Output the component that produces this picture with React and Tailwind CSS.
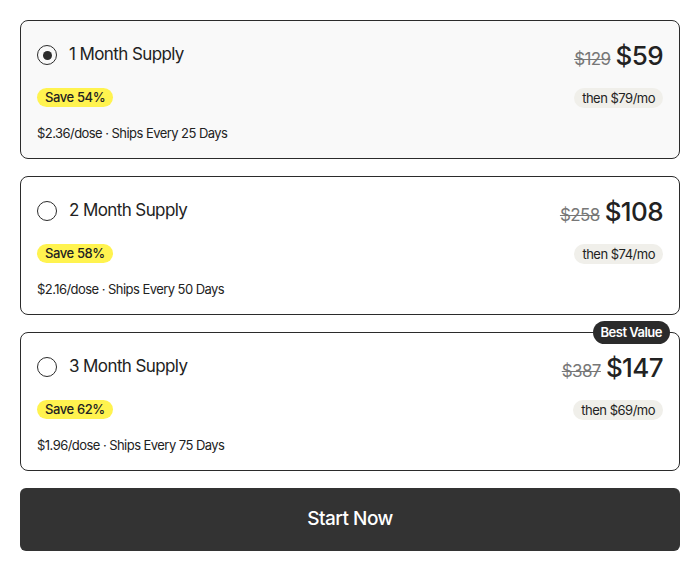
import React, { useState } from "react";

const plans = [
  { id: 1, name: "1 Month Supply", old: "$129", price: "$59", save: "Save 54%", then: "then $79/mo", dose: "$2.36/dose · Ships Every 25 Days" },
  { id: 2, name: "2 Month Supply", old: "$258", price: "$108", save: "Save 58%", then: "then $74/mo", dose: "$2.16/dose · Ships Every 50 Days" },
  { id: 3, name: "3 Month Supply", old: "$387", price: "$147", save: "Save 62%", then: "then $69/mo", dose: "$1.96/dose · Ships Every 75 Days", best: true },
];

function PlanCard({ plan, selected, onSelect }) {
  return (
    <div
      onClick={onSelect}
      className={`relative cursor-pointer rounded-lg px-4 pt-[18px] pb-[16px] ${
        selected ? "border-[1.5px] border-[#2b2b2b] bg-[#f9f9f9]" : "border border-[#2b2b2b] bg-white"
      }`}
    >
      {plan.best && (
        <span className="absolute -top-[12px] right-[9px] rounded-full bg-[#2b2b2b] px-[8px] py-[3px] text-[13px] font-semibold leading-[17px] tracking-[-0.5px] text-white">
          Best Value
        </span>
      )}
      <div className="flex h-8 items-center justify-between">
        <div className="flex items-center gap-[12px]">
          <span className="flex h-[20px] w-[20px] items-center justify-center rounded-full border-[1.5px] border-[#2b2b2b]">
            {selected && <span className="h-[9px] w-[9px] rounded-full bg-[#2b2b2b]" />}
          </span>
          <span className="text-[17px] tracking-[-0.6px] text-[#222]">{plan.name}</span>
        </div>
        <div className="flex items-baseline gap-[5px]">
          <span className="text-[17px] tracking-[-0.6px] text-[#777] line-through">{plan.old}</span>
          <span className="text-[26px] font-medium tracking-[-0.6px] text-[#222]">{plan.price}</span>
        </div>
      </div>
      <div className="mt-[17px] flex h-[19px] items-center justify-between">
        <span className="rounded-full bg-[#fff34f] px-[8px] text-[13px] font-medium leading-[19px] tracking-[-0.4px] text-[#222]">
          {plan.save}
        </span>
        <span className="rounded-full bg-[#f0efea] px-[8px] text-[13px] leading-[20px] tracking-[-0.5px] text-[#222]">
          {plan.then}
        </span>
      </div>
      <div className="mt-[17px] text-[13px] leading-[18px] tracking-[-0.55px] text-[#222]">{plan.dose}</div>
    </div>
  );
}

export default function App() {
  const [selected, setSelected] = useState(1);
  return (
    <div className="min-h-screen bg-white p-5" style={{ fontFamily: "Inter, 'Liberation Sans', sans-serif" }}>
      <div className="flex w-[660px] flex-col gap-[17px]">
        {plans.map((p) => (
          <PlanCard key={p.id} plan={p} selected={selected === p.id} onSelect={() => setSelected(p.id)} />
        ))}
        <button className="h-[63px] w-full rounded-md bg-[#333333] text-[19px] font-medium tracking-[-0.5px] text-white">
          Start Now
        </button>
      </div>
    </div>
  );
}
